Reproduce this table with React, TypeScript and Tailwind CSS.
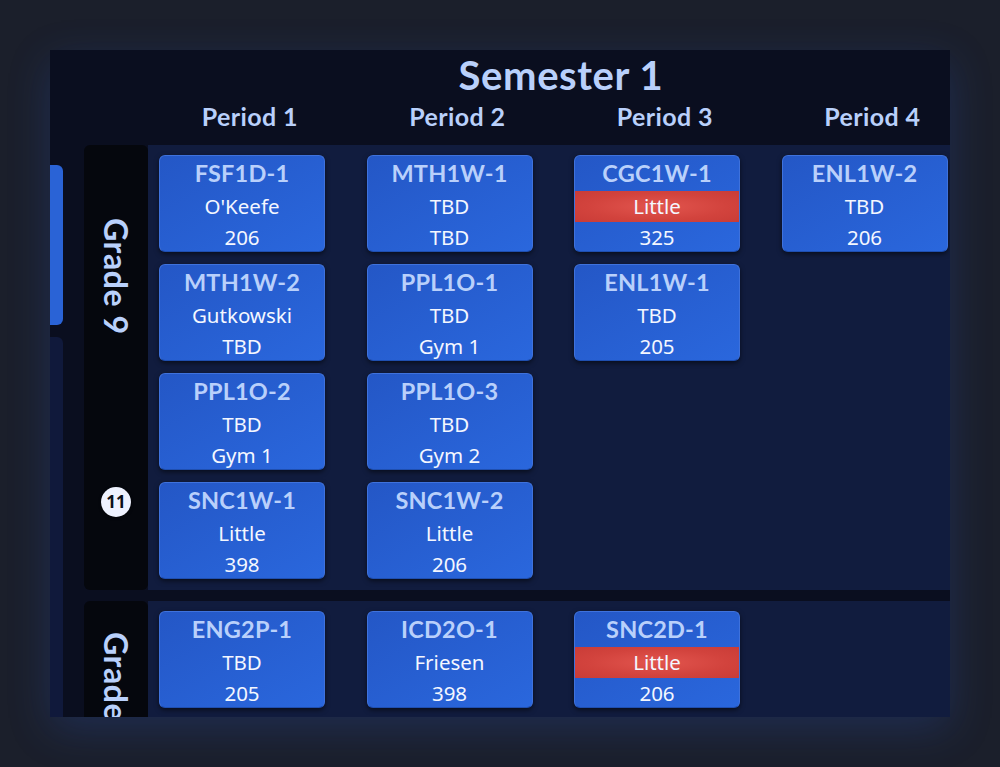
import React from "react";

type Card = { code: string; teacher: string; room: string; warn?: boolean } | null;

const grade9: Card[][] = [
  [
    { code: "FSF1D-1", teacher: "O'Keefe", room: "206" },
    { code: "MTH1W-1", teacher: "TBD", room: "TBD" },
    { code: "CGC1W-1", teacher: "Little", room: "325", warn: true },
    { code: "ENL1W-2", teacher: "TBD", room: "206" },
  ],
  [
    { code: "MTH1W-2", teacher: "Gutkowski", room: "TBD" },
    { code: "PPL1O-1", teacher: "TBD", room: "Gym 1" },
    { code: "ENL1W-1", teacher: "TBD", room: "205" },
    null,
  ],
  [
    { code: "PPL1O-2", teacher: "TBD", room: "Gym 1" },
    { code: "PPL1O-3", teacher: "TBD", room: "Gym 2" },
    null,
    null,
  ],
  [
    { code: "SNC1W-1", teacher: "Little", room: "398" },
    { code: "SNC1W-2", teacher: "Little", room: "206" },
    null,
    null,
  ],
];

const grade10: Card[][] = [
  [
    { code: "ENG2P-1", teacher: "TBD", room: "205" },
    { code: "ICD2O-1", teacher: "Friesen", room: "398" },
    { code: "SNC2D-1", teacher: "Little", room: "206", warn: true },
    null,
  ],
];

const heading = { fontFamily: "Lato, 'Noto Sans', sans-serif" };
const body = { fontFamily: "'Noto Sans', Inter, sans-serif" };

function CourseCard({ c }: { c: Card }) {
  if (!c) return <div className="w-[166px] h-[97px]" />;
  return (
    <div className="w-[166px] h-[97px] rounded-[6px] overflow-hidden border border-[#3f72dc] border-b-[#1f4fb0] bg-gradient-to-br from-[#2457c6] to-[#2a67dd] shadow-[0_2px_5px_rgba(0,0,0,0.55)] flex flex-col">
      <div
        className="h-[35px] shrink-0 pt-[1px] flex items-center justify-center text-[23.5px] font-bold text-[#b9d0fb] tracking-[0.2px]"
        style={heading}
      >
        {c.code}
      </div>
      <div
        className={
          "h-[31px] shrink-0 flex items-center justify-center text-[20.5px] text-[#f4f7ff] " +
          (c.warn
            ? "bg-[radial-gradient(ellipse_at_center,#e2554e_0%,#d2433d_60%,#c93c37_100%)]"
            : "")
        }
        style={body}
      >
        {c.teacher}
      </div>
      <div
        className="h-[30px] shrink-0 flex items-center justify-center text-[20.5px] text-[#f4f7ff]"
        style={body}
      >
        {c.room}
      </div>
    </div>
  );
}

function GradeSection({
  label,
  rows,
  first,
  badge,
}: {
  label: string;
  rows: Card[][];
  first?: boolean;
  badge?: string;
}) {
  return (
    <div className="flex shrink-0">
      <div className="ml-[21px] w-[64px] shrink-0 rounded-[6px] bg-[#05070d] flex flex-col items-center">
        <div className={first ? "pt-[73px]" : "pt-[31px]"}>
          <div
            className="text-[32px] font-bold text-[#b9d0fb] leading-none tracking-[0.6px] whitespace-nowrap"
            style={{ ...heading, writingMode: "vertical-rl" }}
          >
            {label}
          </div>
        </div>
        {badge && (
          <div
            className="mt-[152px] w-[30px] h-[30px] rounded-full bg-[#eef2ff] flex items-center justify-center text-[17px] font-bold text-[#0b0f1a] shadow-[0_1px_3px_rgba(0,0,0,0.6)]"
            style={body}
          >
            {badge}
          </div>
        )}
      </div>
      <div className="flex-1 bg-[#111c3e] pl-[11px] pt-[10px] pb-[11px] flex flex-col gap-[12px]">
        {rows.map((r, i) => (
          <div key={i} className="flex gap-x-[41.5px]">
            {r.map((c, j) => (
              <div key={j} className="shrink-0">
                <CourseCard c={c} />
              </div>
            ))}
          </div>
        ))}
      </div>
    </div>
  );
}

export default function App() {
  return (
    <div className="w-[1000px] h-[767px] bg-[#1b1f2b] pt-[50px] pl-[50px] overflow-hidden">
      <div className="w-[900px] h-[667px] bg-[#0a0e1f] overflow-hidden flex shadow-[0_12px_40px_rgba(45,95,220,0.22)]">
        <div className="w-[13px] shrink-0 pt-[115px] flex flex-col gap-[12px]">
          <div className="h-[160px] rounded-r-[6px] bg-[#2a63d6]" />
          <div className="flex-1 rounded-tr-[6px] bg-[#10193b]" />
        </div>
        <div className="flex-1 min-w-0 flex flex-col">
          <div className="h-[95px] shrink-0 flex flex-col">
            <div
              className="ml-[83px] w-[830px] shrink-0 h-[50px] text-center text-[40px] leading-[50px] font-bold text-[#b9d0fb] tracking-[0.6px]"
              style={heading}
            >
              Semester 1
            </div>
            <div className="ml-[83px] w-[830px] shrink-0 mt-[2px] grid grid-cols-4">
              {["Period 1", "Period 2", "Period 3", "Period 4"].map((p) => (
                <div
                  key={p}
                  className="text-center text-[25px] leading-[28px] font-bold text-[#b9d0fb] tracking-[0.4px]"
                  style={heading}
                >
                  {p}
                </div>
              ))}
            </div>
          </div>
          <GradeSection label="Grade 9" rows={grade9} first badge="11" />
          <div className="h-[11px] shrink-0" />
          <GradeSection label="Grade 10" rows={grade10} />
        </div>
      </div>
    </div>
  );
}
